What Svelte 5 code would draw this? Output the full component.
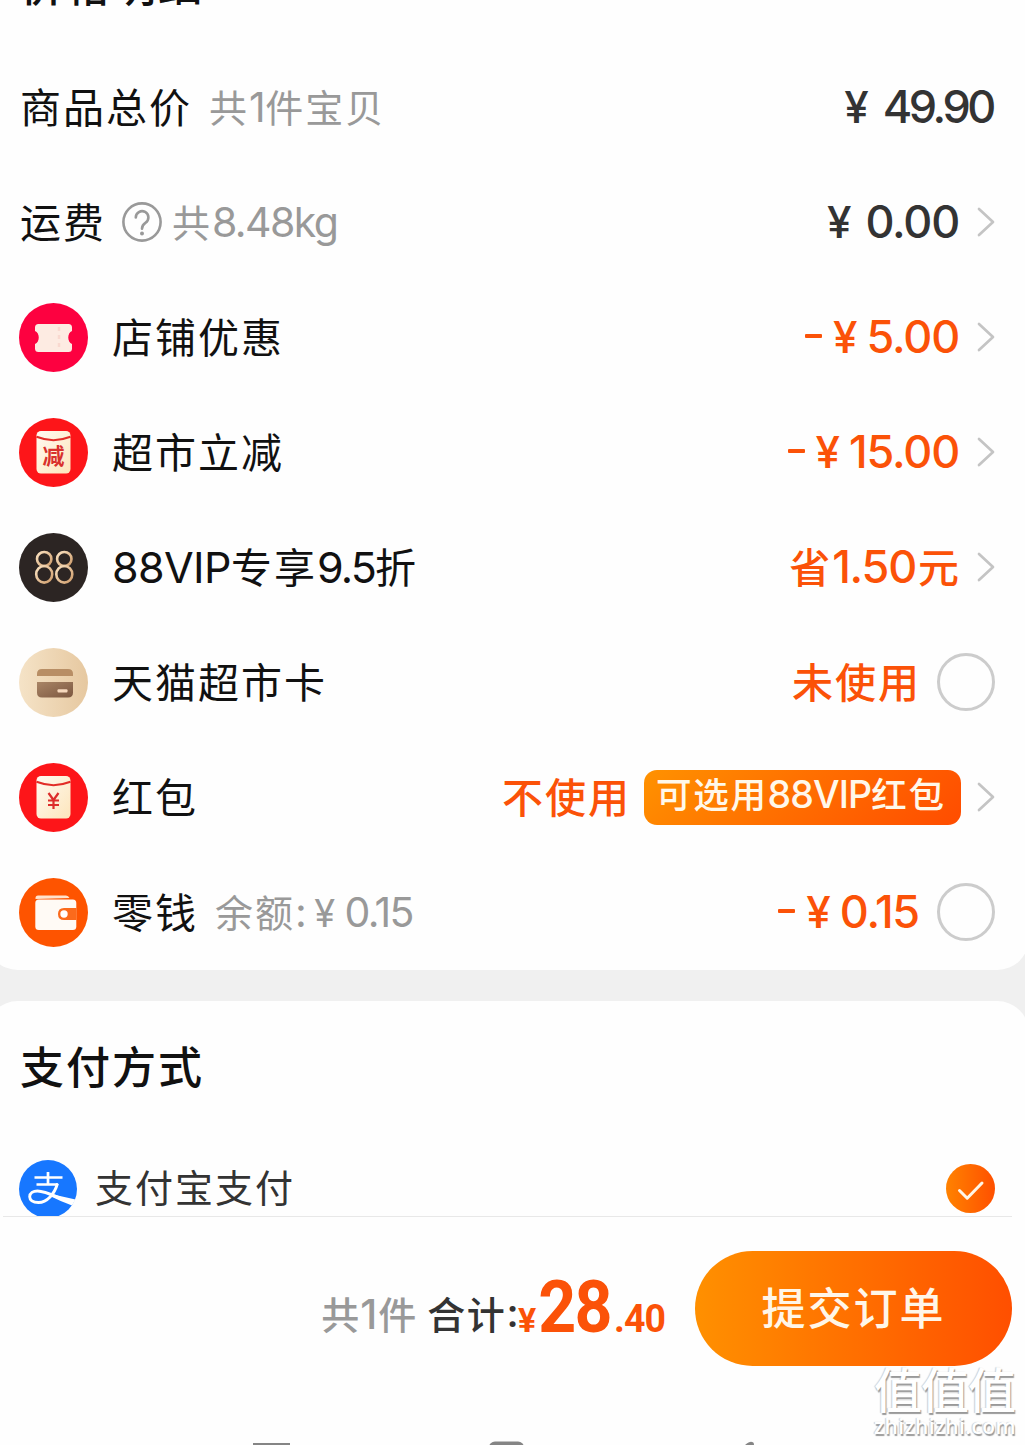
<script>
  const rows = [
    { icon: 'ticket', label: '店铺优惠', minus: true, amount: '5.00', end: 'arrow' },
    { icon: 'discount', label: '超市立减', minus: true, amount: '15.00', end: 'arrow' },
    { icon: 'vip', label: 'vip', saving: '1.50', end: 'arrow' },
    { icon: 'card', label: '天猫超市卡', status: '未使用', end: 'radio' },
    { icon: 'packet', label: '红包', status: '不使用', badge: true, end: 'arrow' },
    { icon: 'wallet', label: '零钱', balance: '0.15', minus: true, amount: '0.15', end: 'radio' }
  ];
</script>

{#snippet arrow()}
  <svg class="arrow" width="18" height="30" viewBox="0 0 18 30"><path d="M2 2 16 15 2 28" fill="none" stroke="#c4c4c4" stroke-width="2.7" stroke-linecap="round" stroke-linejoin="round" /></svg>
{/snippet}

{#snippet envelope()}
  <circle cx="34.5" cy="34.5" r="34.5" fill="#fd1519" />
  <rect x="17.5" y="13" width="34" height="42.500" rx="4.500" fill="url(#cream)" />
  <path d="M17.500 18.800Q34.500 25.500 51.500 18.800" fill="none" stroke="#e22c27" stroke-width="2" />
{/snippet}

{#snippet badgeIcon(name)}
  <svg class="badge-icon" width="69" height="69" viewBox="0 0 69 69">
    <defs>
      <linearGradient id="cream" x1="0" y1="0" x2="1" y2="1"><stop offset="0" stop-color="#fffaf2" /><stop offset="1" stop-color="#fde5bb" /></linearGradient>
      <linearGradient id="sand" x1="0" y1="0" x2="1" y2="0"><stop offset="0" stop-color="#f5e3c7" /><stop offset="1" stop-color="#e6c8a0" /></linearGradient>
      <linearGradient id="gold" x1="0" y1="0" x2="1" y2="1"><stop offset="0" stop-color="#fbe3c2" /><stop offset="1" stop-color="#cf9d6c" /></linearGradient>
      <linearGradient id="brown" x1="0" y1="0" x2="1" y2="1"><stop offset="0" stop-color="#a98566" /><stop offset="1" stop-color="#7c5740" /></linearGradient>
    </defs>
    {#if name === 'ticket'}
      <circle cx="34.5" cy="34.5" r="34.5" fill="#fd0140" />
      <path d="M19.500 21h30q3.500 0 3.500 3.500v3.500c-5 2-5 11 0 13v4.500q0 3.500-3.500 3.500h-30q-3.500 0-3.500-3.500v-4.500c5-2 5-11 0-13v-3.500q0-3.500 3.500-3.500Z" fill="#fdebe2" />
      <path d="M40 24v22" stroke="#f9d9d0" stroke-width="2.500" stroke-dasharray="4 4" />
    {:else if name === 'discount'}
      {@render envelope()}
      <text class="cut" x="34.500" y="46" text-anchor="middle">减</text>
    {:else if name === 'vip'}
      <circle cx="34.5" cy="34.5" r="34.5" fill="#2c2523" />
      <g fill="none" stroke="url(#gold)" stroke-width="2.600">
        <ellipse cx="25.200" cy="26" rx="7.200" ry="7" /><ellipse cx="25.200" cy="41.300" rx="8" ry="8.300" />
        <ellipse cx="45.300" cy="26" rx="7.200" ry="7" /><ellipse cx="45.300" cy="41.300" rx="8" ry="8.300" />
      </g>
    {:else if name === 'card'}
      <circle cx="34.5" cy="34.5" r="34.5" fill="url(#sand)" />
      <path d="M18 28v-2q0-5 5-5h26q5 0 5 5v2Z" fill="#b88e65" />
      <path d="M18 34h36v10.500q0 5-5 5H23q-5 0-5-5Z" fill="url(#brown)" />
      <rect x="38.500" y="41.200" width="10" height="3.300" rx="1" fill="#f6d8bd" />
    {:else if name === 'packet'}
      {@render envelope()}
      <path d="m29.500 30 5 7 5-7M34.500 37v9M29 37.500h11M29 42h11" fill="none" stroke="#dd2d2b" stroke-width="2.200" />
    {:else}
      <circle cx="34.5" cy="34.5" r="34.5" fill="#fe5400" />
      <path d="M16.500 21v-1q0-2.500 2.500-2.500h28q2.500 0 3.500 2.500Z" fill="#ffe3cd" />
      <rect x="16.300" y="21.500" width="41" height="30.500" rx="3.500" fill="#fffaf5" />
      <path d="M57.500 30H45q-6 0-6 6t6 6h12.500Z" fill="#fb6a1c" />
      <circle cx="45" cy="36" r="3.700" fill="#fff" />
    {/if}
  </svg>
{/snippet}

<main class="page">
  <section class="card details">
    <header class="clipped"><h2>价格明细</h2></header>
    <div class="row">
      <span class="label">商品总价</span>
      <span class="note total-note">共<span class="num one">1</span>件宝贝</span>
      <span class="price dark"><span class="yen wide">¥</span><span class="digits snug">49.90</span></span>
    </div>
    <div class="row">
      <span class="label">运费</span>
      <svg class="help" width="40" height="40" viewBox="0 0 40 40" fill="none" stroke="#999" stroke-width="2.600"><circle cx="20" cy="20" r="18.600" /><path d="M13.800 15.500a6.300 6.300 0 1 1 9.600 5.300c-2.300 1.500-3.400 2.900-3.400 6" stroke-linecap="round" /><circle cx="20" cy="31.500" r="2" fill="#999" stroke="none" /></svg>
      <span class="note weight">共<span class="num">8.48kg</span></span>
      <span class="price dark"><span class="yen wide">¥</span><span class="digits">0.00</span></span>
      {@render arrow()}
    </div>
    {#each rows as row}
      <div class="row">
        {@render badgeIcon(row.icon)}
        {#if row.label === 'vip'}
          <span class="label"><span class="num">88VIP</span>专享<span class="num rate">9.5</span>折</span>
        {:else}
          <span class="label">{row.label}</span>
        {/if}
        {#if row.balance}
          <span class="note balance">余额<span class="num">:</span><span class="num sign">¥</span><span class="num">{row.balance}</span></span>
        {/if}
        <span class="price" class:tagged={row.badge}>
          {#if row.minus}<span class="minus"></span><span class="yen">¥</span>{/if}
          {#if row.amount}<span class="digits">{row.amount}</span>{/if}
          {#if row.saving}<span class="cn">省</span><span class="digits">{row.saving}</span><span class="cn last">元</span>{/if}
          {#if row.status}<span class="cn status">{row.status}</span>{/if}
          {#if row.badge}<span class="tag">可选用<span class="num">88VIP</span>红包</span>{/if}
        </span>
        {#if row.end === 'arrow'}{@render arrow()}{:else}<span class="radio"></span>{/if}
      </div>
    {/each}
  </section>

  <section class="card payment">
    <h2>支付方式</h2>
    <div class="method">
      <svg class="alipay" width="58" height="58" viewBox="0 0 58 58">
        <circle cx="29" cy="29" r="29" fill="#1777ff" />
        <path d="M15.500 17.500h28M29 12v13M17.500 24.500h21.500" fill="none" stroke="#fff" stroke-width="2.700" />
        <path d="M38.500 23.500C35.500 34 28 42.500 19.500 42.500C13.500 42.500 10.700 40 10.700 36.800C10.700 33.200 14.200 31 18.500 31C27 31 37 37 52 42.500" fill="none" stroke="#fff" stroke-width="2.900" />
        <path d="M32 34 56.500 39.500l-3.500 6Q42 41.500 32 36.500Z" fill="#fff" />
      </svg>
      <span>支付宝支付</span>
      <svg class="check" width="49" height="49" viewBox="0 0 49 49">
        <defs><linearGradient id="flame"><stop offset="0" stop-color="#ff8200" /><stop offset="1" stop-color="#ff5000" /></linearGradient></defs>
        <circle cx="24.500" cy="24.500" r="24.500" fill="url(#flame)" />
        <path d="m13.500 26.500 7.700 7.700L36 19" fill="none" stroke="#fff6e8" stroke-width="3" stroke-linecap="round" stroke-linejoin="round" />
      </svg>
    </div>
  </section>

  <footer>
    <div class="checkout">
      <span class="count">共<span class="num">1</span>件</span>
      <span class="sum">合计</span><span class="colon">:</span>
      <span class="total"><span class="t-yen">¥</span><span class="t-int">28</span><span class="t-dec">.40</span></span>
      <button>提交订单</button>
    </div>
    <svg class="nav" width="1025" height="4" viewBox="0 0 1025 4" fill="#858585">
      <rect x="253" y="2" width="37" height="4" /><rect x="489" y="0.500" width="35" height="20" rx="6" /><path d="M745 4q5-4 7-3 2 0 2 3Z" />
    </svg>
    <div class="watermark"><span class="mark">值值值</span><span class="site">zhizhizhi.com</span></div>
  </footer>
</main>

<style>
  :global(body) { background: #f0f0f0; }
  .page { height: 1445px; overflow: hidden; display: flex; flex-direction: column; font-family: Inter, "Noto Sans CJK SC", sans-serif; color: #111; }
  .card { background: #fefefe; margin: 0 -4px 0 -14px; padding: 0 34px 0 34px; }
  .details { border-radius: 0 0 32px 32px; }
  .clipped { height: 50px; display: flex; align-items: flex-start; overflow: hidden; }
  .clipped h2 { margin-top: -46px; }
  h2 { margin: 0; font: 500 44px/58px "Noto Sans CJK SC", sans-serif; letter-spacing: 2px; }
  .row { height: 115px; display: flex; align-items: center; white-space: nowrap; }
  .label { font: 400 41px/60px "Noto Sans CJK SC", sans-serif; letter-spacing: 2px; margin-top: -6px; }
  .num { font-family: Inter, sans-serif; line-height: 1; }
  .label .num { font-size: 43px; letter-spacing: -0.6px; }
  .label .rate { letter-spacing: -1.8px; }
  .note { font: 400 38px/60px "Noto Sans CJK SC", sans-serif; letter-spacing: 2px; color: #999; margin-top: -4px; }
  .total-note { margin-left: 17px; }
  .note .num { font-size: 41px; letter-spacing: -1.6px; }
  .note .one { letter-spacing: -0.5px; }
  .help { margin: -1px 10px 0 16px; }
  .balance { margin-left: 17px; }
  .balance .sign { font-size: 38px; margin: 0 11px 0 9px; }
  .badge-icon { margin: 0 24px 0 -1px; }
  .cut { font: 700 22px "Noto Sans CJK SC", sans-serif; fill: #d9302c; }
  .price { margin-left: auto; display: flex; align-items: center; color: #fb5208; font: 500 45px/60px Inter, sans-serif; }
  .tagged { margin-right: -2px; }
  .dark { color: #333; }
  .digits { letter-spacing: -1.2px; margin-top: -1px; }
  .snug { letter-spacing: -3.4px; margin-right: 2px; }
  .yen { font-size: 44px; margin: -1px 9px 0 0; }
  .wide { margin-right: 14px; }
  .minus { width: 17px; height: 4px; border-radius: 1px; background: currentColor; margin: -3px 11px 0 0; }
  .cn { font: 500 41px/60px "Noto Sans CJK SC", sans-serif; letter-spacing: 2px; margin-top: -6px; }
  .status { margin-right: -2px; }
  .last { letter-spacing: 0; margin-left: 2px; }
  .arrow { margin: -2px 0 0 18px; }
  .radio { box-sizing: border-box; width: 58px; height: 58px; margin: -2px 0 0 18px; border: 3px solid #ccc; border-radius: 50%; }
  .tag { box-sizing: border-box; width: 317px; height: 55px; margin-left: 15px; padding-left: 12px; border-radius: 13px; background: linear-gradient(135deg, #ff9200, #ff7000 45%, #ff4c00); color: #fff8ea; font: 500 35.5px/46px "Noto Sans CJK SC", sans-serif; letter-spacing: 1.7px; }
  .tag .num { font-size: 37.5px; letter-spacing: -0.9px; }
  .payment { flex: none; margin-top: 31px; height: 215px; overflow: hidden; border-radius: 32px 32px 0 0; }
  .payment h2 { margin-top: 35px; }
  .method { display: flex; align-items: center; margin-top: 66px; height: 58px; font: 400 38px/58px "Noto Sans CJK SC", sans-serif; letter-spacing: 2px; color: #333; }
  .alipay { margin: 0 18px 0 -1px; }
  .method span { margin-top: -7px; }
  .check { margin: -1px 0 0 auto; }
  footer { position: relative; flex: 1; background: #fefefe; display: flex; flex-direction: column; }
  .checkout { margin: 0 13px 0 3px; border-top: 1px solid #e8e8e8; padding-top: 34px; display: flex; align-items: center; justify-content: flex-end; white-space: nowrap; }
  .count { font: 500 38px/60px "Noto Sans CJK SC", sans-serif; color: #999; letter-spacing: 0; margin-top: 9px; }
  .count .num { font-size: 41px; margin: 0 1px; }
  .sum { font: 500 38px/60px "Noto Sans CJK SC", sans-serif; letter-spacing: 1.5px; color: #333; margin: 9px 1px 0 11px; }
  .colon { font: 700 38px/60px Roboto, sans-serif; color: #333; margin-top: 10px; }
  .total { font-family: Roboto, sans-serif; font-weight: 700; color: #fb5208; display: flex; align-items: baseline; }
  .t-yen { font-size: 34px; margin-right: -4px; }
  .t-int { font-size: 72px; line-height: 80px; letter-spacing: -2px; transform: scaleX(0.92); transform-origin: right; }
  .t-dec { font-size: 39px; margin-left: 1px; letter-spacing: -1px; transform: scaleX(0.96); transform-origin: right; }
  .t-yen, .t-int, .t-dec { position: relative; top: -1px; }
  button { width: 317px; height: 115px; margin-left: 30px; padding: 0 0 4px; border: 0; border-radius: 58px; background: linear-gradient(90deg, #ff9000, #ff4f00); color: #fff6e8; font: 500 44px/111px "Noto Sans CJK SC", sans-serif; letter-spacing: 2px; }
  .nav { margin-top: auto; }
  .watermark { position: absolute; right: 9px; top: 145px; display: flex; flex-direction: column; color: #fff; text-shadow: 1px 2px 1px #999, -1px 0 1px #ccc; white-space: nowrap; }
  .mark { font: 500 48px/53px "Noto Sans CJK SC", sans-serif; letter-spacing: -1px; }
  .site { font: 600 21px/24px "Open Sans", sans-serif; letter-spacing: 0.4px; }
</style>
